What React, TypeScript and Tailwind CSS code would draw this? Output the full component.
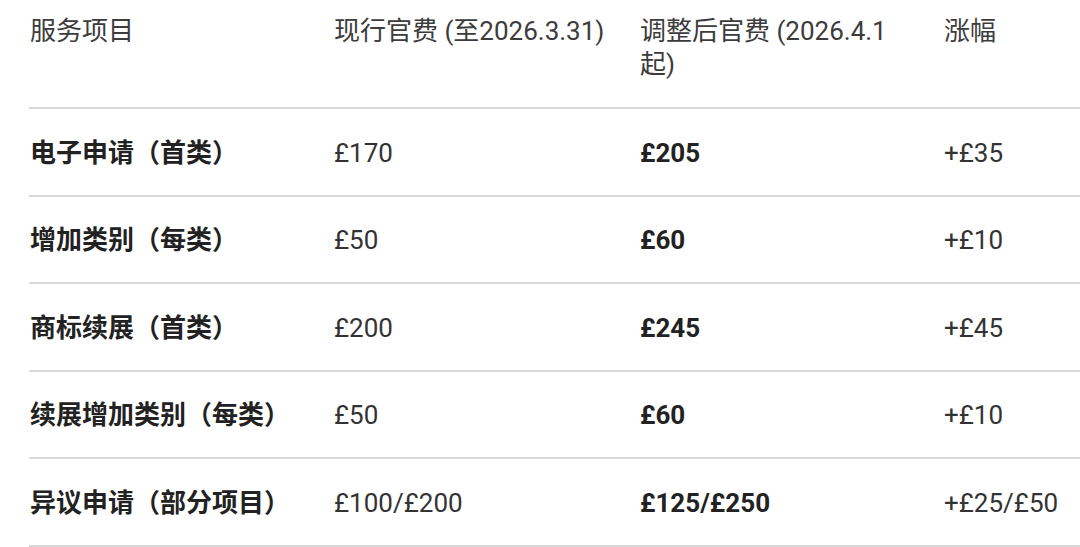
import React from "react";

const rows = [
  ["电子申请（首类）", "£170", "£205", "+£35"],
  ["增加类别（每类）", "£50", "£60", "+£10"],
  ["商标续展（首类）", "£200", "£245", "+£45"],
  ["续展增加类别（每类）", "£50", "£60", "+£10"],
  ["异议申请（部分项目）", "£100/£200", "£125/£250", "+£25/£50"],
];

export default function App() {
  return (
    <div
      className="w-[1080px] h-[547px] bg-white overflow-hidden pl-[29px]"
      style={{ fontFamily: "Roboto, 'Noto Sans CJK SC', sans-serif" }}
    >
      <div className="grid grid-cols-[305px_306px_304px_1fr] h-[109px] border-b-2 border-[#d9d9d9] pt-[15px] text-[26px] leading-[33px] text-[#3c3c3c] items-start">
        <div className="pl-[1px]">服务项目</div>
        <div>现行官费 (至2026.3.31)</div>
        <div>
          调整后官费 (2026.4.1
          <br />
          起)
        </div>
        <div>涨幅</div>
      </div>
      {rows.map((r, i) => (
        <div
          key={i}
          className="grid grid-cols-[305px_306px_304px_1fr] h-[87.5px] border-b-2 border-[#d9d9d9] items-center pt-[3px] text-[26px] leading-[33px]"
        >
          <div className="pl-[1px] font-bold text-[#222222]">{r[0]}</div>
          <div className="text-[#333333]">{r[1]}</div>
          <div className="font-bold text-[#222222]">{r[2]}</div>
          <div className="text-[#333333]">{r[3]}</div>
        </div>
      ))}
    </div>
  );
}
